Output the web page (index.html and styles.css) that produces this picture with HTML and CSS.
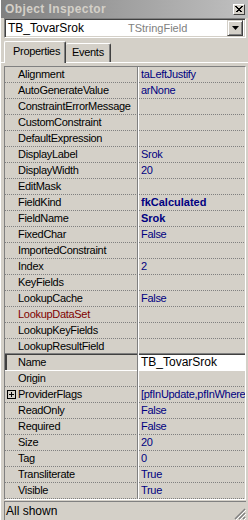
FILE: index.html
```html
<!DOCTYPE html>
<html lang="en">

<head>
    <meta charset="UTF-8">
    <title>Object Inspector</title>
    <link rel="stylesheet" href="styles.css">
</head>

<body>
    <div class="window">
        <!-- Caption -->
        <div class="caption">
            <span class="caption-text">Object Inspector</span>
            <span class="close-btn">
                <svg width="8" height="7" viewBox="0 0 8 7"><path d="M0.5 0.5 L6.5 6.5 M1.5 0.5 L7.5 6.5 M6.5 0.5 L0.5 6.5 M7.5 0.5 L1.5 6.5" stroke="#000" stroke-width="1" shape-rendering="crispEdges"/></svg>
            </span>
        </div>

        <!-- Component selector -->
        <div class="combo">
            <span class="combo-name">TB_TovarSrok</span>
            <span class="combo-type">TStringField</span>
            <span class="combo-btn">
                <svg width="7" height="4" viewBox="0 0 7 4"><path d="M0 0 H7 L3.5 4 Z" fill="#000"/></svg>
            </span>
        </div>

        <!-- Tabs -->
        <div class="tabs">
            <div class="tab tab-active">Properties</div>
            <div class="tab">Events</div>
        </div>

        <!-- Property grid -->
        <div class="grid">
            <div class="row"><div class="name">Alignment</div><div class="value">taLeftJustify</div></div>
            <div class="row"><div class="name">AutoGenerateValue</div><div class="value">arNone</div></div>
            <div class="row"><div class="name">ConstraintErrorMessage</div><div class="value"></div></div>
            <div class="row"><div class="name">CustomConstraint</div><div class="value"></div></div>
            <div class="row"><div class="name">DefaultExpression</div><div class="value"></div></div>
            <div class="row"><div class="name">DisplayLabel</div><div class="value">Srok</div></div>
            <div class="row"><div class="name">DisplayWidth</div><div class="value">20</div></div>
            <div class="row"><div class="name">EditMask</div><div class="value"></div></div>
            <div class="row"><div class="name">FieldKind</div><div class="value bold">fkCalculated</div></div>
            <div class="row"><div class="name">FieldName</div><div class="value bold">Srok</div></div>
            <div class="row"><div class="name">FixedChar</div><div class="value">False</div></div>
            <div class="row"><div class="name">ImportedConstraint</div><div class="value"></div></div>
            <div class="row"><div class="name">Index</div><div class="value">2</div></div>
            <div class="row"><div class="name">KeyFields</div><div class="value"></div></div>
            <div class="row"><div class="name">LookupCache</div><div class="value">False</div></div>
            <div class="row"><div class="name ref">LookupDataSet</div><div class="value"></div></div>
            <div class="row"><div class="name">LookupKeyFields</div><div class="value"></div></div>
            <div class="row before-sel"><div class="name">LookupResultField</div><div class="value"></div></div>
            <div class="row selected"><div class="name">Name</div><div class="value">TB_TovarSrok</div></div>
            <div class="row"><div class="name">Origin</div><div class="value"></div></div>
            <div class="row"><div class="name expand"><span class="plus">
                <svg width="9" height="9" viewBox="0 0 9 9"><path d="M0.5 0.5 H8.5 V8.5 H0.5 Z M2 4.5 H7 M4.5 2 V7" stroke="#000" fill="none" shape-rendering="crispEdges"/></svg>
            </span>ProviderFlags</div><div class="value">[pfInUpdate,pfInWhere]</div></div>
            <div class="row"><div class="name">ReadOnly</div><div class="value">False</div></div>
            <div class="row"><div class="name">Required</div><div class="value">False</div></div>
            <div class="row"><div class="name">Size</div><div class="value">20</div></div>
            <div class="row"><div class="name">Tag</div><div class="value">0</div></div>
            <div class="row"><div class="name">Transliterate</div><div class="value">True</div></div>
            <div class="row"><div class="name">Visible</div><div class="value">True</div></div>
        </div>

        <!-- Status bar -->
        <div class="status">
            <div class="status-panel">All shown</div>
            <svg class="grip" width="12" height="12" viewBox="0 0 12 12">
                <path d="M11 1 L1 11 M11 5 L5 11 M11 9 L9 11" stroke="#808080" stroke-width="1.4"/>
                <path d="M12 2 L2 12 M12 6 L6 12 M12 10 L10 12" stroke="#fff" stroke-width="1"/>
            </svg>
        </div>
    </div>
</body>

</html>
```

FILE: styles.css
```css
body {
    margin: 0;
    background-color: #d4d0c8;
    font-family: "Liberation Sans", Arial, sans-serif;
    font-size: 11px;
    letter-spacing: -0.3px;
    color: #000;
}

.window {
    width: 248px;
    height: 520px;
    box-sizing: border-box;
    border-left: 1px solid #fff;
    display: flex;
    flex-direction: column;
    overflow: hidden;
}

/* caption */
.caption {
    height: 18px;
    flex: none;
    display: flex;
    align-items: center;
    justify-content: space-between;
    padding: 0 3px 0 4px;
    background: linear-gradient(to right, #808080, #c0c0c0);
}

.caption-text {
    color: #d4d0c8;
    font-size: 12px;
    font-weight: bold;
    letter-spacing: 0.4px;
}

.close-btn {
    width: 12px;
    height: 11px;
    box-sizing: border-box;
    background-color: #d4d0c8;
    border: 1px solid;
    border-color: #fff #404040 #404040 #fff;
    display: flex;
    align-items: center;
    justify-content: center;
}

/* combo box */
.combo {
    height: 20px;
    flex: none;
    box-sizing: border-box;
    margin: 0 2px 0 3px;
    border: 1px solid;
    border-color: #808080 #fff #fff #808080;
    box-shadow: inset 1px 1px #404040, inset -1px -1px #d4d0c8;
    background-color: #fff;
    display: flex;
    align-items: center;
    padding: 1px 2px 1px 2px;
    font-size: 12px;
    letter-spacing: 0;
}

.combo-name {
    width: 120px;
    padding-left: 1px;
}

.combo-type {
    flex: 1;
    color: #808080;
    font-size: 11px;
}

.combo-btn {
    width: 16px;
    height: 16px;
    box-sizing: border-box;
    background-color: #d4d0c8;
    border: 1px solid;
    border-color: #d4d0c8 #404040 #404040 #d4d0c8;
    box-shadow: inset 1px 1px #fff, inset -1px -1px #808080;
    display: flex;
    align-items: center;
    justify-content: center;
}

/* tabs */
.tabs {
    height: 22px;
    flex: none;
    box-sizing: border-box;
    margin-top: 3px;
    padding-left: 3px;
    border-bottom: 1px solid #fff;
    display: flex;
    align-items: flex-end;
}

.tab {
    height: 19px;
    box-sizing: border-box;
    padding: 2px 6px 0 6px;
    border-top: 1px solid #fff;
    border-right: 1px solid #404040;
    box-shadow: inset -1px 0 #808080;
    border-radius: 2px 2px 0 0;
}

.tab-active {
    width: 62px;
    height: 22px;
    margin-bottom: -1px;
    padding: 3px 0 0 8px;
    border-left: 1px solid #fff;
    background-color: #d4d0c8;
    position: relative;
}

/* property grid */
.grid {
    margin: 3px 2px 0 3px;
    height: 434px;
    flex: none;
    box-sizing: border-box;
    border: 1px solid;
    border-color: #808080 #fff #fff #808080;
    overflow: hidden;
}

.row {
    height: 16px;
    display: flex;
    line-height: 15px;
}

.name,
.value {
    box-sizing: border-box;
    height: 16px;
    white-space: nowrap;
    overflow: hidden;
    background-image: repeating-linear-gradient(to right, #808080 0 1px, transparent 1px 2px);
    background-size: 100% 1px;
    background-position: bottom;
    background-repeat: no-repeat;
}

.name {
    width: 133px;
    flex: none;
    padding-left: 13px;
    border-right: 1px solid #808080;
}

.value {
    flex: 1;
    padding-left: 2px;
    border-left: 1px solid #fff;
    color: #000080;
}

.bold {
    font-weight: bold;
    letter-spacing: 0;
}

.ref {
    color: #800000;
}

.expand {
    display: flex;
    align-items: center;
    padding-left: 2px;
    padding-bottom: 1px;
}

.plus {
    display: flex;
    margin-right: 2px;
}

.before-sel .name,
.before-sel .value {
    background-image: none;
    box-shadow: inset 0 -1px #404040, inset 0 -2px #808080;
}

.selected .name,
.selected .value {
    background-image: none;
    box-shadow: inset 0 -1px #fff;
}

.selected .name {
    box-shadow: inset 0 -1px #fff, inset 2px 0 #404040;
}

.selected .value {
    background-color: #fff;
    color: #000;
    font-size: 12px;
    letter-spacing: 0;
}

/* status bar */
.status {
    margin: 1px 2px 0 3px;
    height: 19px;
    flex: none;
    display: flex;
    position: relative;
    font-size: 12px;
    letter-spacing: 0;
}

.status-panel {
    flex: 1;
    box-sizing: border-box;
    border-top: 1px solid #808080;
    border-left: 1px solid #808080;
    padding: 2px 0 0 1px;
}

.grip {
    position: absolute;
    right: 0;
    bottom: 0;
}
```
